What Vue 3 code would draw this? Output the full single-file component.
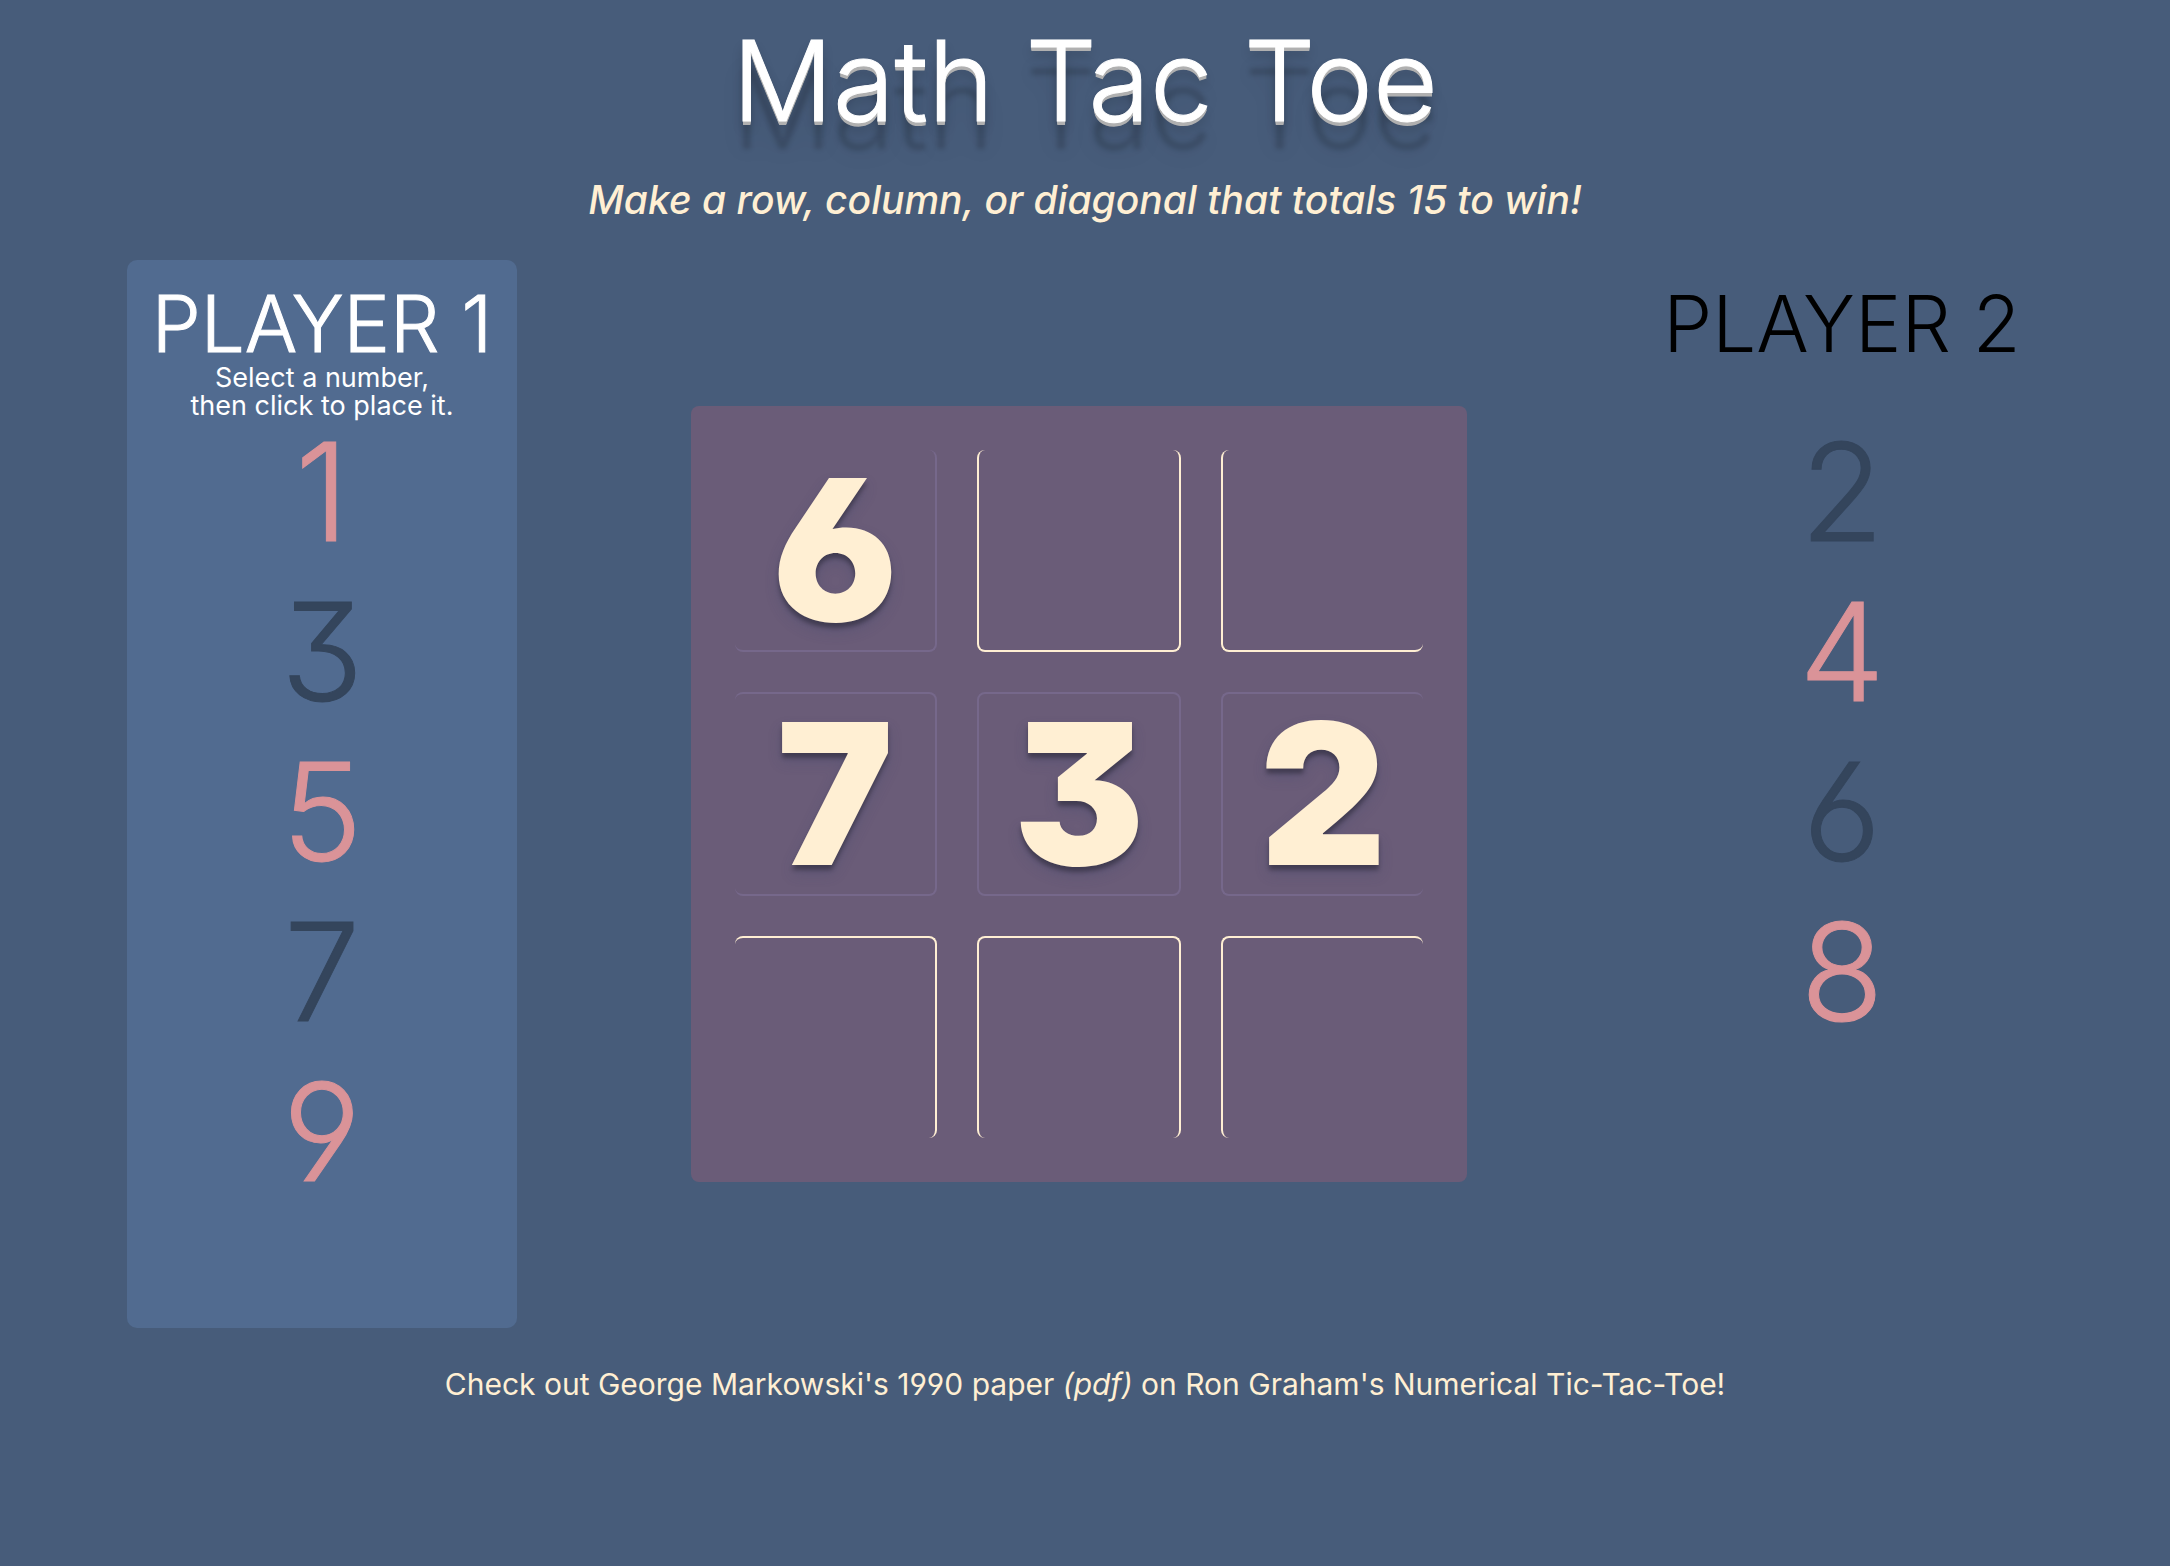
<script setup>
import { ref } from 'vue'

const players = ref([
  { name: 'Player 1', active: true, numbers: [1, 3, 5, 7, 9] },
  { name: 'Player 2', active: false, numbers: [2, 4, 6, 8] },
])

const board = ref([
  [6, null, null],
  [7, 3, 2],
  [null, null, null],
])

const selected = ref(null)

const isUsed = (n) => board.value.some((row) => row.includes(n))

function place(r, c) {
  if (selected.value === null || board.value[r][c] !== null) return
  board.value[r][c] = selected.value
  selected.value = null
  players.value.forEach((p) => (p.active = !p.active))
}
</script>

<template>
  <div class="page">
    <header class="header">
      <h1 class="title">Math Tac Toe</h1>
      <p class="tagline">Make a row, column, or diagonal that totals 15 to win!</p>
    </header>

    <main class="game">
      <section
        v-for="(player, i) in players"
        :key="player.name"
        class="player"
        :class="[`player-${i + 1}`, { active: player.active }]"
      >
        <h2 class="name">{{ player.name }}</h2>
        <p class="hint">
          <template v-if="player.active">Select a number,<br />then click to place it.</template>
        </p>
        <div class="numbers">
          <button
            v-for="n in player.numbers"
            :key="n"
            type="button"
            class="number"
            :disabled="isUsed(n)"
            @click="player.active && (selected = n)"
          >{{ n }}</button>
        </div>
      </section>

      <div class="board">
        <div v-for="(row, r) in board" :key="r" class="row">
          <button
            v-for="(cell, c) in row"
            :key="c"
            type="button"
            class="cell"
            :class="{ filled: cell !== null }"
            :aria-label="cell === null ? `Row ${r + 1}, column ${c + 1}` : undefined"
            @click="place(r, c)"
          >{{ cell }}</button>
        </div>
      </div>
    </main>

    <footer class="footer">
      <a href="#paper">Check out George Markowski's 1990 paper <em>(pdf)</em> on Ron Graham's Numerical Tic-Tac-Toe!</a>
    </footer>
  </div>
</template>

<style>
body {
  margin: 0;
  background: #475c7a;
}
</style>

<style scoped>
.page {
  min-height: 100vh;
  box-sizing: border-box;
  padding-top: 16px;
  font-family: Inter, Roboto, sans-serif;
  font-feature-settings: 'cv03', 'cv04', 'cv09';
  color: #ffefd3;
}

.header {
  text-align: center;
}

.title {
  margin: 0;
  font-size: 112px;
  line-height: 128px;
  font-weight: 300;
  -webkit-text-stroke: 1px currentColor;
  color: #fff;
  text-shadow:
    0 1px 0 #b0b0b0,
    0 2px 0 #b0b0b0,
    0 3px 0 #b0b0b0,
    0 4px 0 #b0b0b0,
    0 8px 12px rgba(0, 0, 0, 0.16),
    0 28px 5px rgba(0, 0, 0, 0.16),
    0 30px 24px rgba(0, 0, 0, 0.08);
}

.tagline {
  margin: 32px 0 36px;
  font-size: 39px;
  line-height: 48px;
  font-weight: 500;
  font-style: italic;
}

.game {
  display: flex;
  justify-content: space-around;
  align-items: center;
  padding: 0 40px;
}

.player {
  align-self: stretch;
  box-sizing: border-box;
  width: 390px;
  padding: 24px 0 136px;
  border-radius: 10px;
  text-align: center;
  color: #000;
}

.player-2 {
  order: 2;
  width: 402px;
}

.player.active {
  background: #516b90;
  color: #fff;
}

.name {
  margin: 0;
  font-size: 78px;
  line-height: 80px;
  font-weight: 300;
  -webkit-text-stroke: 1px currentColor;
  text-transform: uppercase;
}

.player-2 .name {
  -webkit-text-stroke: 0;
}

.hint {
  min-height: 56px;
  margin: 0 0 12px;
  font-size: 27px;
  line-height: 28px;
}

.numbers {
  display: flex;
  flex-direction: column;
  align-items: center;
  gap: 40px;
}

.number {
  width: 120px;
  height: 120px;
  padding: 0;
  border: 0;
  background: none;
  font: inherit;
  font-size: 136px;
  line-height: 120px;
  font-weight: 300;
  -webkit-text-stroke: 1px currentColor;
  color: #da9398;
  cursor: pointer;
}

.number:disabled {
  color: #34455c;
  cursor: default;
}

.board {
  display: flex;
  flex-direction: column;
  gap: 40px;
  order: 1;
  padding: 44px;
  border-radius: 8px;
  background: #6a5c78;
}

.row {
  display: flex;
  gap: 40px;
}

.cell {
  box-sizing: content-box;
  width: 200px;
  height: 200px;
  padding: 0;
  border: 2px solid #ffefd3;
  border-radius: 8px;
  background: none;
  font: inherit;
  font-size: 196px;
  line-height: 200px;
  font-weight: 900;
  color: #ffefd3;
  text-shadow:
    0 5px 4px rgba(0, 0, 0, 0.3),
    0 8px 14px rgba(60, 70, 110, 0.3);
  cursor: pointer;
}

.cell.filled {
  border-color: #76688b;
}

.row:first-child .cell {
  border-top: 0;
}

.row:last-child .cell {
  border-bottom: 0;
}

.cell:first-child {
  border-left: 0;
}

.cell:last-child {
  border-right: 0;
}

.footer {
  padding: 36px 0;
  text-align: center;
  font-size: 30px;
  line-height: 40px;
}

.footer a {
  color: inherit;
  text-decoration: none;
}
</style>
